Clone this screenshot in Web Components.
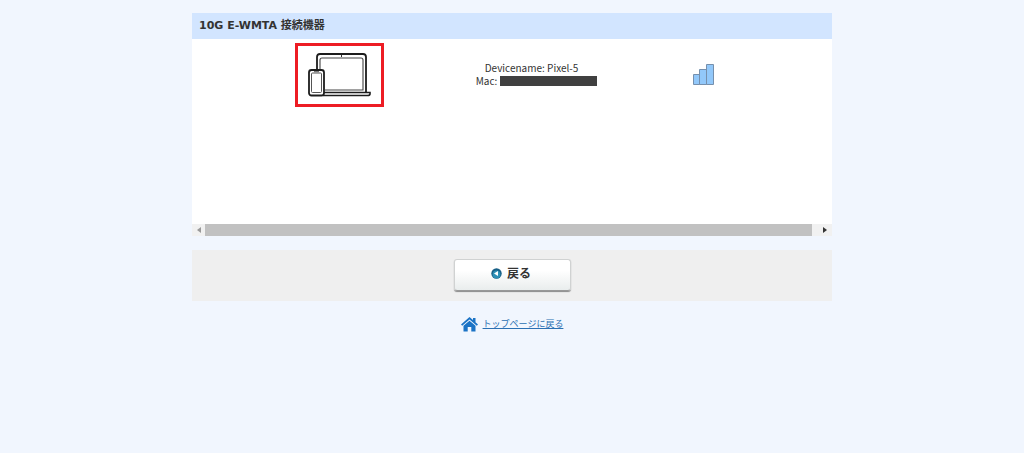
<!DOCTYPE html>
<html lang="ja">
<head>
<meta charset="utf-8">
<title>10G E-WMTA 接続機器</title>
<style>
body { margin: 0; background: #f1f6fe; color: #333; font: 10px/13px "Noto Sans CJK JP", "Noto Sans", sans-serif; }
</style>
</head>
<body>
<device-page>
  <device-panel heading="10G E-WMTA 接続機器">
    <device-row name="Pixel-5"></device-row>
  </device-panel>
  <back-bar>戻る</back-bar>
  <home-link href="#top">トップページに戻る</home-link>
</device-page>
<script>
function define(name, markup, setup) {
  const template = document.createElement('template');
  template.innerHTML = markup;
  customElements.define(name, class extends HTMLElement {
    connectedCallback() {
      if (this.shadowRoot) return;
      this.attachShadow({ mode: 'open' }).append(template.content.cloneNode(true));
      if (setup) setup(this, this.shadowRoot);
    }
  });
}

define('device-page', `
<style>
:host { display: block; padding: 13px 0; }
main { display: flex; flex-direction: column; gap: 14px; max-width: 640px; margin: 0 auto; }
</style>
<main><slot></slot></main>`);

define('device-panel', `
<style>
:host { display: block; background: #fff; }
h1 { margin: 0; padding: 0 7px; background: #d2e5ff; font: 700 11px/26px "DejaVu Sans", "Noto Sans CJK JP", sans-serif; }
.body { min-height: 185px; box-sizing: border-box; padding: 4px 0; }
</style>
<section>
  <h1></h1>
  <div class="body"><slot></slot></div>
  <scroll-strip></scroll-strip>
</section>`, (host, root) => {
  root.querySelector('h1').textContent = host.getAttribute('heading');
});

define('device-row', `
<style>
:host { display: grid; grid-template-columns: 197fr 197fr 137fr; align-items: center; justify-items: center; padding: 0 60px 0 49px; }
.device { box-sizing: border-box; display: grid; place-items: center; width: 89px; height: 64px; border: 3px solid #ed1c24; }
svg { display: block; }
.info { padding-bottom: 2px; text-align: center; }
.name-line { padding-right: 10px; }
.mac { display: flex; align-items: center; gap: 3px; }
.mask { width: 97px; height: 10px; background: #404040; }
</style>
<div class="device">
  <svg width="63" height="44" viewBox="0 0 63 44" fill="none" role="img" aria-label="PC・スマートフォン">
    <path d="M9 16V4Q9 1 12 1H55Q58 1 58 4V39" stroke="#1c1c1c" stroke-width="1.8"/>
    <path d="M12 16V7Q12 5 14 5H53Q55 5 55 7V37H17" stroke="#444" stroke-width="1.1"/>
    <path d="M33.500 2V4" stroke="#333"/>
    <path d="M16 39.500H62V41Q62 42.500 59.500 42.500H15" stroke="#1c1c1c" stroke-width="1.6"/>
    <rect x="1" y="17" width="15" height="25.500" rx="2.500" fill="#fff" stroke="#1c1c1c" stroke-width="1.8"/>
    <rect x="3.500" y="20" width="10" height="19.500" rx="1" stroke="#555"/>
    <path d="M6 18.700H11" stroke="#555"/>
  </svg>
</div>
<div class="info">
  <div class="name-line">Devicename: <span class="name"></span></div>
  <div class="mac"><span>Mac:</span><span class="mask"></span></div>
</div>
<svg width="22" height="24" viewBox="0 0 22 24" fill="#92c8fa" stroke="#7690ad" role="img" aria-label="電波強度">
  <path d="M.5 11.5H6.5V21.5H.5ZM6.5 6.5H13.5V21.5H6.5ZM13.5 1.5H20.5V21.5H13.5Z"/>
</svg>`, (host, root) => {
  root.querySelector('.name').textContent = host.getAttribute('name');
});

define('scroll-strip', `
<style>
:host { display: flex; height: 12px; background: #f1f1f1; }
button { flex: none; display: grid; place-items: center; width: 13px; padding: 0; border: 0; background: none; color: #999; }
button:last-child { width: 14px; color: #333; }
.track { flex: 1; padding-right: 6px; }
.thumb { height: 100%; background: #c1c1c1; }
</style>
<button type="button" aria-label="左へ"><svg width="4" height="6"><path d="M4 0V6L0 3Z" fill="currentColor"/></svg></button>
<div class="track"><div class="thumb"></div></div>
<button type="button" aria-label="右へ"><svg width="4" height="6"><path d="M0 0V6L4 3Z" fill="currentColor"/></svg></button>`);

define('back-bar', `
<style>
:host { display: flex; justify-content: center; padding: 9px 0 10px; background: #efefef; }
button { display: flex; align-items: center; justify-content: center; gap: 5px; box-sizing: border-box; width: 117px; height: 32px; padding: 0 2px 4px 0; border: 1px solid #d0d2d2; border-bottom-color: #999; border-radius: 3px; background: linear-gradient(#fff 35%, #e9eded); box-shadow: 0 1px 1px #8a8a8a; color: #333; font: 700 12px/16px "Noto Sans CJK JP", sans-serif; }
</style>
<button type="button">
  <svg width="11" height="11" viewBox="0 0 11 11" aria-hidden="true"><circle cx="5.5" cy="5.5" r="5.2" fill="#175f86"/><circle cx="5.5" cy="6.4" r="3.9" fill="#2c8fb5"/><path d="M7 3V8L3 5.5Z" fill="#fff"/></svg>
  <slot></slot>
</button>`);

define('home-link', `
<style>
:host { display: flex; justify-content: center; }
a { display: flex; align-items: center; gap: 5px; color: #2b70b3; font: 9px/18px "Noto Sans CJK JP", sans-serif; text-decoration: none; }
span { text-decoration: underline; }
</style>
<a>
  <svg width="17" height="16" viewBox="0 0 17 16" fill="#1b73c5" aria-hidden="true"><path d="M8.5 1 12 4V2H14.500V6.200L17 8.400 15.800 9.700 8.500 3.400 1.200 9.700 0 8.400Z"/><path d="M8.500 4.700 14.500 9.800V15.500H10.300V11H6.700V15.500H2.500V9.800Z"/></svg>
  <span><slot></slot></span>
</a>`, (host, root) => {
  root.querySelector('a').href = host.getAttribute('href');
});
</script>
</body>
</html>
